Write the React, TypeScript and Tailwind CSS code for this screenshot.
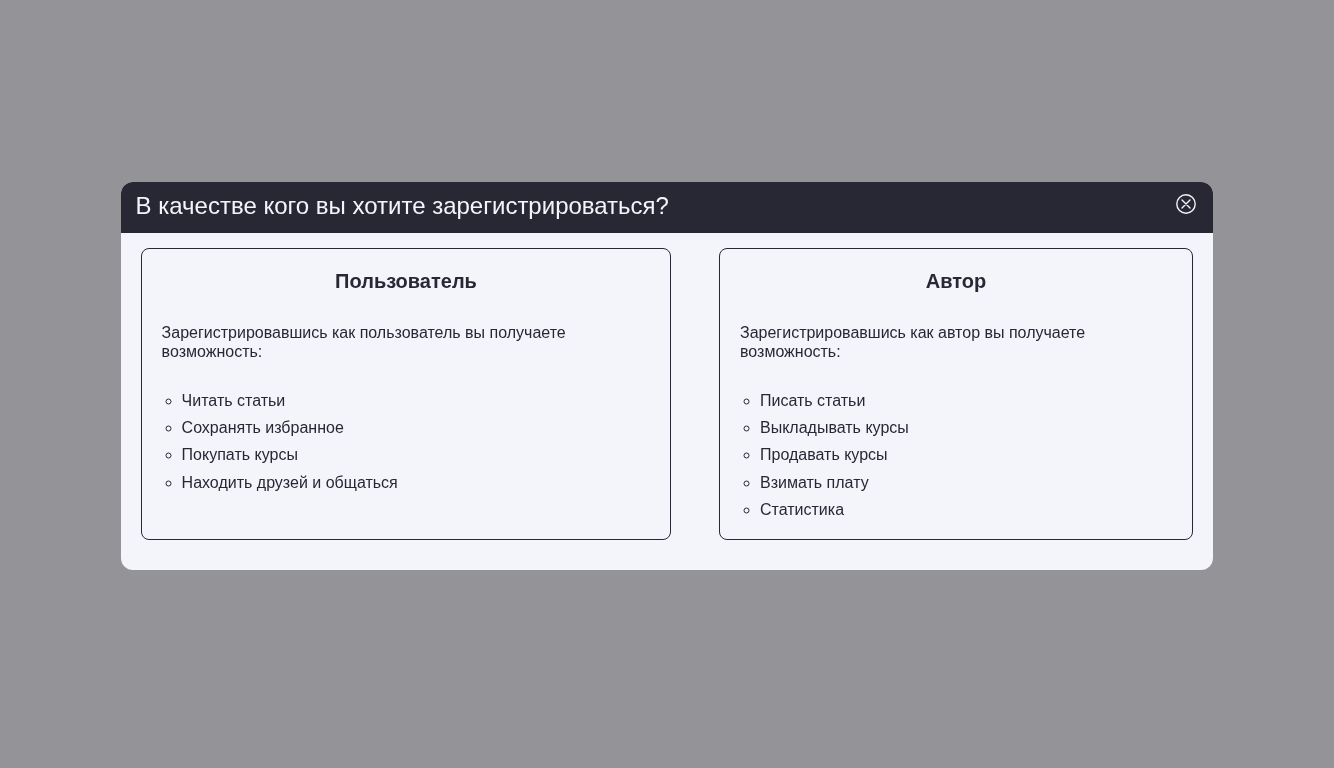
import React from 'react';

const userItems = ['Читать статьи', 'Сохранять избранное', 'Покупать курсы', 'Находить друзей и общаться'];
const authorItems = ['Писать статьи', 'Выкладывать курсы', 'Продавать курсы', 'Взимать плату', 'Статистика'];

function RoleCard({ title, text, items, className, bodyClass }: { title: string; text: string; items: string[]; className: string; bodyClass: string }) {
  return (
    <div className={`h-[292px] rounded-lg border border-[#282835] pt-[21px] ${className}`}>
      <h2 className="text-center text-[20px] font-bold leading-[23px]">{title}</h2>
      <div className={`pr-5 ${bodyClass}`}>
        <p className="mt-[30px] text-base leading-[19px]">{text}</p>
        <ul className="mt-[26px] list-[circle] pl-5 text-base leading-[27.2px]">
          {items.map((item) => (
            <li key={item}>{item}</li>
          ))}
        </ul>
      </div>
    </div>
  );
}

export default function App() {
  return (
    <div className="relative h-screen bg-[#949397] font-['Liberation_Sans',Arial,sans-serif] text-[#282835]">
      <div className="absolute left-1/2 top-[49%] h-[388px] w-[1092px] -translate-x-1/2 -translate-y-1/2 overflow-hidden rounded-xl bg-[#f3f5fb] will-change-transform">
        <div className="flex h-[51px] items-start justify-between bg-[#282835] pl-[14.6px] pr-[17px]">
          <h1 className="pt-[10px] text-[24px] leading-[28px] text-[#f3f5fb]">В качестве кого вы хотите зарегистрироваться?</h1>
          <button className="mt-[12px] flex h-5 w-5 items-center justify-center">
            <svg width="20" height="20" viewBox="0 0 20 20" fill="none" stroke="#f3f5fb" strokeWidth="1.4">
              <circle cx="10" cy="10" r="9.2" />
              <path d="M6 6L14 14M14 6L6 14" strokeLinecap="round" />
            </svg>
          </button>
        </div>
        <div className="flex gap-12 px-5 pt-[15px]">
          <RoleCard
            className="w-[530px]"
            bodyClass="pl-[19.6px]"
            title="Пользователь"
            text="Зарегистрировавшись как пользователь вы получаете возможность:"
            items={userItems}
          />
          <RoleCard
            className="w-[474px]"
            bodyClass="pl-5"
            title="Автор"
            text="Зарегистрировавшись как автор вы получаете возможность:"
            items={authorItems}
          />
        </div>
      </div>
    </div>
  );
}
